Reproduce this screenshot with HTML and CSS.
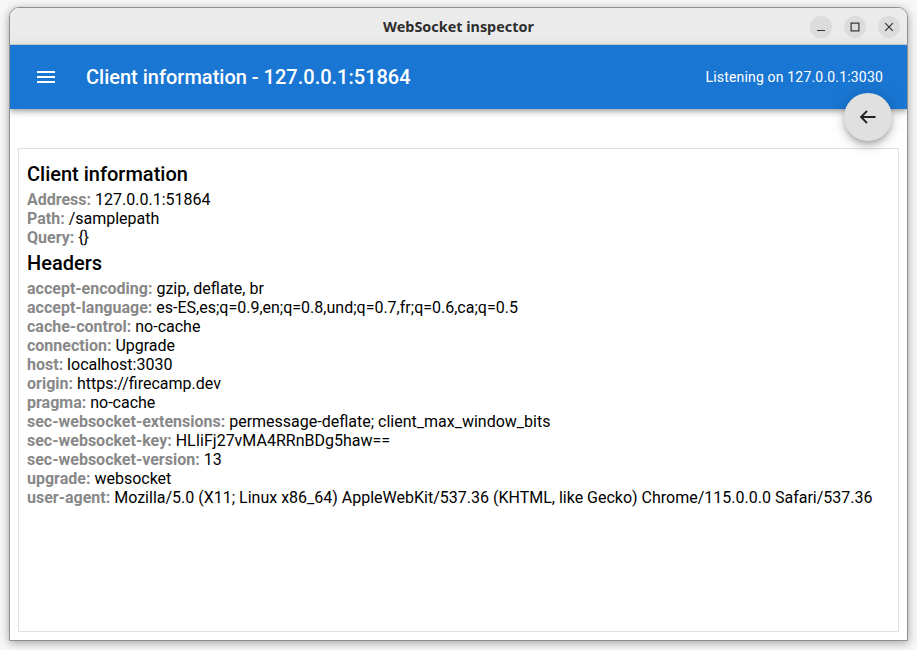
FILE: index.html
```html
<!DOCTYPE html>
<html>
<head>
<meta charset="utf-8">
<link rel="stylesheet" href="styles.css">
</head>
<body>
<div class="window">
  <div class="titlebar">
    <div class="title">WebSocket inspector</div>
    <div class="wbuttons">
      <span class="wbtn"><svg width="10" height="10" viewBox="0 0 10 10"><path d="M1 8.5h8" stroke="#333" stroke-width="1.2"/></svg></span>
      <span class="wbtn"><svg width="10" height="10" viewBox="0 0 10 10"><rect x="1.1" y="1.1" width="7.8" height="7.8" fill="none" stroke="#333" stroke-width="1.2"/></svg></span>
      <span class="wbtn"><svg width="10" height="10" viewBox="0 0 10 10"><path d="M1.2 1.2l7.6 7.6M8.8 1.2l-7.6 7.6" stroke="#333" stroke-width="1.2"/></svg></span>
    </div>
  </div>
  <div class="app">
    <header class="appbar">
      <svg class="menu" width="24" height="24" viewBox="0 0 24 24"><path d="M3 18h18v-2H3v2zm0-5h18v-2H3v2zm0-7v2h18V6H3z" fill="#fff"/></svg>
      <div class="apptitle">Client information - 127.0.0.1:51864</div>
      <div class="listening">Listening on 127.0.0.1:3030</div>
    </header>
    <button class="fab"><svg width="24" height="24" viewBox="0 0 24 24"><path d="M19.5 12H5M11 6l-6 6 6 6" fill="none" stroke="#222" stroke-width="1.8"/></svg></button>
    <main class="content">
      <section class="card">
        <h3 class="heading">Client information</h3>
        <div class="row"><span class="key">Address:</span> 127.0.0.1:51864</div>
        <div class="row"><span class="key">Path:</span> /samplepath</div>
        <div class="row"><span class="key">Query:</span> {}</div>
        <h3 class="heading">Headers</h3>
        <div class="row"><span class="key">accept-encoding:</span> gzip, deflate, br</div>
        <div class="row"><span class="key">accept-language:</span> es-ES,es;q=0.9,en;q=0.8,und;q=0.7,fr;q=0.6,ca;q=0.5</div>
        <div class="row"><span class="key">cache-control:</span> no-cache</div>
        <div class="row"><span class="key">connection:</span> Upgrade</div>
        <div class="row"><span class="key">host:</span> localhost:3030</div>
        <div class="row"><span class="key">origin:</span> https://firecamp.dev</div>
        <div class="row"><span class="key">pragma:</span> no-cache</div>
        <div class="row"><span class="key">sec-websocket-extensions:</span> permessage-deflate; client_max_window_bits</div>
        <div class="row"><span class="key">sec-websocket-key:</span> HLIiFj27vMA4RRnBDg5haw==</div>
        <div class="row"><span class="key">sec-websocket-version:</span> 13</div>
        <div class="row"><span class="key">upgrade:</span> websocket</div>
        <div class="row"><span class="key">user-agent:</span> Mozilla/5.0 (X11; Linux x86_64) AppleWebKit/537.36 (KHTML, like Gecko) Chrome/115.0.0.0 Safari/537.36</div>
      </section>
    </main>
  </div>
</div>
</body>
</html>
```

FILE: styles.css
```css
* { box-sizing: border-box; }
html, body { margin: 0; height: 100%; }
body {
  background: #f7f7f7;
  padding: 7px 0 0 9px;
  font-family: Roboto, "Liberation Sans", sans-serif;
}
.window {
  width: 899px;
  height: 634px;
  border: 1px solid #8f8f8f;
  border-radius: 10px 10px 0 0;
  background: #fff;
  box-shadow: 0 2px 10px rgba(0,0,0,0.35);
  display: flex;
  flex-direction: column;
  overflow: hidden;
}
.titlebar {
  height: 37px;
  flex: none;
  background: #ebebeb;
  border-bottom: 1px solid #d2d2d2;
  display: flex;
  align-items: center;
  justify-content: center;
  position: relative;
}
.title {
  font-family: "Noto Sans", "DejaVu Sans", sans-serif;
  font-weight: 700;
  font-size: 14.4px;
  color: #2e2e2e;
}
.wbuttons {
  position: absolute;
  right: 7px;
  top: 8px;
  display: flex;
  gap: 12px;
}
.wbtn {
  width: 22px;
  height: 22px;
  border-radius: 50%;
  background: #dcdcdc;
  display: flex;
  align-items: center;
  justify-content: center;
}
.app {
  flex: 1;
  display: flex;
  flex-direction: column;
  position: relative;
  min-height: 0;
}
.appbar {
  height: 64px;
  flex: none;
  background: #1976d2;
  color: #fff;
  display: flex;
  align-items: center;
  padding: 0 24px;
  box-shadow: 0 2px 4px -1px rgba(0,0,0,0.2), 0 4px 5px 0 rgba(0,0,0,0.14), 0 1px 10px 0 rgba(0,0,0,0.12);
  position: relative;
  z-index: 1;
}
.menu { flex: none; margin-right: 28px; }
.apptitle {
  font-size: 20px;
  font-weight: 500;
  flex: 1;
}
.listening {
  font-size: 14px;
  letter-spacing: 0.18px;
}
.fab {
  position: absolute;
  right: 15px;
  top: 48px;
  width: 48px;
  height: 48px;
  border-radius: 50%;
  border: none;
  background: #e0e0e0;
  display: flex;
  align-items: center;
  justify-content: center;
  padding: 0;
  z-index: 2;
  box-shadow: 0 3px 5px -1px rgba(0,0,0,0.2), 0 6px 10px 0 rgba(0,0,0,0.14), 0 1px 18px 0 rgba(0,0,0,0.12);
}
.content {
  flex: 1;
  padding: 39px 8px 8px 8px;
  display: flex;
  min-height: 0;
}
.card {
  flex: 1;
  border: 1px solid #e0e0e0;
  padding: 9px 8px 8px;
  font-size: 16px;
  color: #000;
}
.heading {
  font-size: 20px;
  font-weight: 500;
  margin: 4px 0 4px;
  line-height: normal;
}
.row { line-height: normal; }
.key {
  color: #888;
  font-weight: 700;
}
```
